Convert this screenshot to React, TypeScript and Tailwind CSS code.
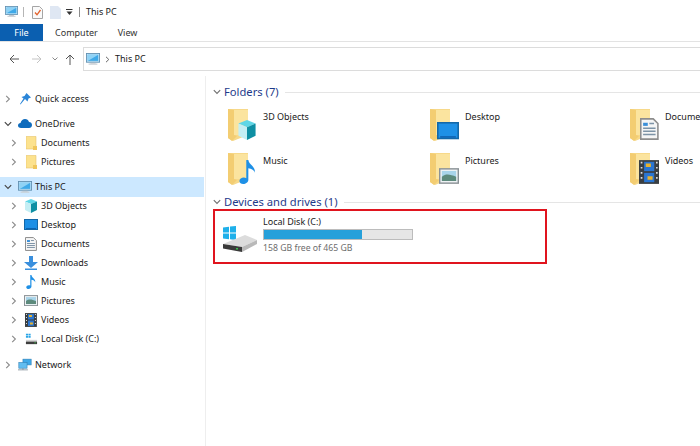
import React from 'react';

const font = { fontFamily: '"Noto Sans", "Open Sans", sans-serif' };

function Chevron({ open, color = '#7a7a7a' }: { open?: boolean; color?: string }) {
  return (
    <svg width="8" height="8" viewBox="0 0 8 8" fill="none" stroke={color} strokeWidth="1.1">
      {open ? <path d="M.8 2.2 4 5.4l3.2-3.2" /> : <path d="M2.2.8 5.4 4 2.2 7.2" />}
    </svg>
  );
}

function Monitor({ w = 16 }: { w?: number }) {
  return (
    <svg width={w} height={w * 0.875} viewBox="0 0 16 14">
      <rect x=".5" y=".5" width="15" height="10" fill="#bfe3f7" stroke="#5f8fb0" />
      <rect x="2" y="2" width="12" height="7" fill="#3fa9e8" />
      <path d="M2 2h12L2 9z" fill="#8fd2f5" />
      <rect x="5" y="11" width="6" height="1" fill="#a9b4bc" />
      <rect x="3" y="12" width="10" height="1.4" fill="#c9d0d5" />
    </svg>
  );
}

function SmallFolder() {
  return (
    <svg width="11" height="14" viewBox="0 0 11 14">
      <path d="M0 .5h10v12.5H0z" fill="#fce28e" stroke="#e6c56c" strokeWidth=".6" />
      <path d="M7 10h4v4H7z" fill="#f0c65c" />
    </svg>
  );
}

function Cube({ s = 14 }: { s?: number }) {
  return (
    <svg width={s} height={s} viewBox="0 0 14 14">
      <path d="M7 0 13 2.5 7 5 1 2.5z" fill="#5fd6e6" />
      <path d="M1 2.500 7 5v9L1 11z" fill="#c4eef4" />
      <path d="M13 2.500 7 5v9l6-3z" fill="#0f8fa3" />
    </svg>
  );
}

function DesktopGlyph({ s = 14 }: { s?: number }) {
  return (
    <svg width={s} height={s * 0.8} viewBox="0 0 14 11.200">
      <rect x=".5" y=".5" width="13" height="10" fill="#1e90e6" stroke="#1468a8" />
      <rect x="2" y="9" width="10" height="1" fill="#0f63b0" />
    </svg>
  );
}

function DocGlyph({ s = 14 }: { s?: number }) {
  return (
    <svg width={s * 0.85} height={s} viewBox="0 0 12 14">
      <path d="M.5.5h8l3 3v10H.5z" fill="#f5f5f5" stroke="#8d8d8d" />
      <path d="M2 3h3v2H2z" fill="#3b8fd8" />
      <path d="M6 3.500h3M2 6.500h8M2 8.500h8M2 10.500h8" stroke="#7d93a6" />
    </svg>
  );
}

function DownloadGlyph() {
  return (
    <svg width="14" height="14" viewBox="0 0 14 14">
      <path d="M5 0h4v6h5l-7 6-7-6h5z" fill="#3a8fdd" />
      <rect x="1" y="12.500" width="12" height="1.500" fill="#3a8fdd" />
    </svg>
  );
}

function NoteGlyph({ s = 14 }: { s?: number }) {
  return (
    <svg width={s * 0.75} height={s} viewBox="0 0 10 14">
      <path d="M4 0h1.200c.4 3 4.300 3.500 3.800 7.500C8.800 6 7 5 5.200 4.800V11.500C5.200 13 3.700 14 2.200 14 1 14 0 13.300 0 12.200 0 11 1.300 10.200 2.500 10.200c.6 0 1.100.1 1.500.4z" fill="#1e90e6" />
    </svg>
  );
}

function PictureGlyph({ s = 14 }: { s?: number }) {
  return (
    <svg width={s} height={s * 0.8} viewBox="0 0 14 11">
      <rect x=".5" y=".5" width="13" height="10" fill="#eef2f4" stroke="#8b9296" />
      <rect x="2" y="2" width="10" height="7" fill="#a8d4ea" />
      <path d="M2 6c3-2.500 6-1.500 10 0v3H2z" fill="#5d8a7c" />
    </svg>
  );
}

function FilmGlyph({ s = 14 }: { s?: number }) {
  return (
    <svg width={s * 0.85} height={s} viewBox="0 0 12 14">
      <rect width="12" height="14" fill="#3a3f42" />
      <rect x="3" y="1" width="6" height="5.500" fill="#2a76d2" />
      <rect x="3" y="7.500" width="6" height="5.500" fill="#2a76d2" />
      <path d="M4 2h3v2H4zM5 9.500h3v2H5z" fill="#e8b32e" />
      <path d="M1 1h1v1H1zM1 4h1v1H1zM1 7h1v1H1zM1 10h1v1H1zM10 1h1v1h-1zM10 4h1v1h-1zM10 7h1v1h-1zM10 10h1v1h-1z" fill="#dcdcdc" />
    </svg>
  );
}

function DriveGlyph() {
  return (
    <svg width="13" height="12" viewBox="0 0 15 14">
      <path d="M1 1h2.500v2H1zM4 1h2.500v2H4zM1 3.500h2.500v2H1zM4 3.500h2.500v2H4z" fill="#2aa5e6" />
      <path d="M1 8h13v2H1z" fill="#d4d4d4" />
      <path d="M1 10h13v3H1z" fill="#3e3e3e" />
      <rect x="11" y="11" width="1.500" height="1" fill="#3fd04f" />
    </svg>
  );
}

function NetworkGlyph() {
  return (
    <svg width="14" height="13" viewBox="0 0 17 15">
      <rect x="6" y="1" width="10" height="7" fill="#3fa9e8" stroke="#2f7fb5" strokeWidth=".7" />
      <rect x="1" y="5" width="10" height="7" fill="#62bdf0" stroke="#2f7fb5" strokeWidth=".7" />
      <path d="M0 14h12M6 12v2" stroke="#7d8a94" />
    </svg>
  );
}

function OneDriveGlyph() {
  return (
    <svg width="14" height="9" viewBox="0 0 14 9">
      <path d="M3 9C1 9 0 7.800 0 6.500 0 5 1.200 4 2.500 4 3.200 1.500 5 0 7 0c2 0 3.500 1.200 4 3 1.700 0 3 1.300 3 3 0 1.700-1.300 3-3 3z" fill="#0f6cbd" />
    </svg>
  );
}

function QuickStar() {
  return (
    <svg width="12" height="12" viewBox="0 0 12 12">
      <path d="M7.500 0 12 4.500 9.500 5.500 8.500 8.500 6 6 1.500 11.500 1 11 4.500 5.500 2.500 4 5.500 3z" fill="#2c86d8" />
    </svg>
  );
}

function TreeRow({ label, icon, level = 1, open, selected, className = '' }: {
  label: string;
  icon: React.ReactNode;
  level?: number;
  open?: boolean;
  selected?: boolean;
  className?: string;
}) {
  return (
    <div className={`flex h-[19px] items-center text-[9px] text-[#1a1a1a] ${selected ? 'bg-[#cce8ff]' : ''} ${className}`}>
      <span className={`flex justify-center ${level === 0 ? 'w-[16px]' : 'w-[28px]'}`}>
        <Chevron open={open} color={open ? '#444444' : '#8a8a8a'} />
      </span>
      {level === 0 ? (
        <span className="flex w-[17px] shrink-0 items-center justify-center">{icon}</span>
      ) : (
        <span className="ml-[-5px] flex w-[16px] shrink-0 items-center justify-center">{icon}</span>
      )}
      <span className="ml-[2px]">{label}</span>
    </div>
  );
}

function BigFolder({ overlay }: { overlay: React.ReactNode }) {
  return (
    <div className="relative h-[33px] w-[35px] shrink-0">
      <svg width="20" height="33" viewBox="0 0 20 33" className="block">
        <path d="M0 0h20v26L5 32 0 29z" fill="#f7d98a" />
        <path d="M6 1h14v25H6z" fill="#fbe49f" />
        <path d="M0 0 6 1v25l3 1-5 5-4-3z" fill="#f3cd72" />
      </svg>
      <div className="absolute bottom-[2px] right-[6px]">{overlay}</div>
    </div>
  );
}

function FolderCell({ label, overlay }: { label: string; overlay: React.ReactNode }) {
  return (
    <div className="flex h-[44px] items-start">
      <BigFolder overlay={overlay} />
      <span className="whitespace-nowrap pt-[1px] text-[9px] text-[#1a1a1a]">{label}</span>
    </div>
  );
}

function SectionHeader({ label }: { label: string }) {
  return (
    <div className="flex h-[16px] items-center">
      <span className="ml-[7px] mr-[3px] flex w-[8px]"><Chevron open color="#6f6f6f" /></span>
      <span className="whitespace-nowrap text-[11.200px] text-[#1e3a8a]">{label}</span>
      <div className="ml-[6px] h-[1px] flex-1 bg-[#e5e5e5]" />
    </div>
  );
}

export default function App() {
  return (
    <div className="flex h-[446px] w-[700px] flex-col overflow-hidden bg-white" style={font}>
      {/* title bar */}
      <div className="flex h-[24px] items-center pl-[5px] text-[9px] text-[#1a1a1a]">
        <Monitor w={13} />
        <div className="ml-[5px] h-[10px] w-[1px] bg-[#b5b5b5]" />
        <svg width="11" height="13" viewBox="0 0 11 13" className="ml-[8px]">
          <path d="M.5.500h7l3 3v9H.5z" fill="#fafafa" stroke="#a5a5a5" />
          <path d="M3 6.500 5 8.800 8.500 4" fill="none" stroke="#e2622c" strokeWidth="1.300" />
        </svg>
        <svg width="11" height="13" viewBox="0 0 11 13" className="ml-[7px]">
          <path d="M0 0h8l3 3v10H0z" fill="#dfe7f3" />
        </svg>
        <svg width="7" height="7" viewBox="0 0 7 7" className="ml-[5px]">
          <path d="M0 .5h6.500" stroke="#333333" />
          <path d="M.5 2.500h6L3.500 6z" fill="#333333" />
        </svg>
        <div className="ml-[6px] h-[10px] w-[1px] bg-[#8d8d8d]" />
        <span className="ml-[6px]">This PC</span>
      </div>

      {/* ribbon tabs */}
      <div className="flex h-[18px] items-stretch border-b border-[#e3e3e3] pt-[1px] text-[9px] text-[#333333]">
        <div className="mt-[-1px] flex w-[43px] items-center justify-center bg-[#0b5fb0] text-white">File</div>
        <span className="ml-[12px] self-center">Computer</span>
        <span className="ml-[20px] self-center">View</span>
      </div>

      {/* navigation bar */}
      <div className="flex h-[29px] items-end">
        <div className="flex h-[24px] w-[83px] items-center pl-[9px]">
          <svg width="11" height="10" viewBox="0 0 11 10" fill="none" stroke="#555555" strokeWidth="1"><path d="M10 5H1M5 1 1 5l4 4" /></svg>
          <svg width="11" height="10" viewBox="0 0 11 10" fill="none" stroke="#c4c4c4" strokeWidth="1" className="ml-[11px]"><path d="M1 5h9M6 1l4 4-4 4" /></svg>
          <svg width="6" height="4" viewBox="0 0 6 4" fill="none" stroke="#8a8a8a" strokeWidth="1" className="ml-[10px]"><path d="M.5.500 3 3 5.500.500" /></svg>
          <svg width="10" height="11" viewBox="0 0 10 11" fill="none" stroke="#555555" strokeWidth="1" className="ml-[7px]"><path d="M5 11V1M1 5l4-4 4 4" /></svg>
        </div>
        <div className="flex h-[24px] flex-1 items-center border border-r-0 border-[#dcdcdc] pl-[2px] text-[9px] text-[#1a1a1a]">
          <Monitor w={14} />
          <span className="ml-[5px]"><svg width="5" height="7" viewBox="0 0 5 7" fill="none" stroke="#666666"><path d="M1 .8 3.800 3.500 1 6.200" /></svg></span>
          <span className="ml-[5px]">This PC</span>
        </div>
      </div>

      <div className="flex flex-1 pt-[5px]">
        {/* navigation pane */}
        <aside className="w-[206px] shrink-0 border-r border-[#eeeeee] pr-[1px] pt-[13px]">
          <TreeRow level={0} label="Quick access" icon={<QuickStar />} />
          <TreeRow level={0} label="OneDrive" open icon={<OneDriveGlyph />} className="mt-[6px]" />
          <TreeRow label="Documents" icon={<SmallFolder />} />
          <TreeRow label="Pictures" icon={<SmallFolder />} />
          <TreeRow level={0} label="This PC" open selected icon={<Monitor w={14} />} className="mt-[6px] !h-[20px]" />
          <TreeRow label="3D Objects" icon={<Cube />} className="mt-[-1px]" />
          <TreeRow label="Desktop" icon={<DesktopGlyph />} />
          <TreeRow label="Documents" icon={<DocGlyph />} />
          <TreeRow label="Downloads" icon={<DownloadGlyph />} />
          <TreeRow label="Music" icon={<NoteGlyph />} />
          <TreeRow label="Pictures" icon={<PictureGlyph />} />
          <TreeRow label="Videos" icon={<FilmGlyph />} />
          <TreeRow label="Local Disk (C:)" icon={<DriveGlyph />} />
          <TreeRow level={0} label="Network" icon={<NetworkGlyph />} className="mt-[7px]" />
        </aside>

        {/* content */}
        <main className="min-w-0 flex-1 pt-[8px]">
          <SectionHeader label="Folders (7)" />
          <div className="mt-[9px] grid grid-cols-[202px_200px_100px] pl-[22px]">
            <FolderCell label="3D Objects" overlay={<Cube s={20} />} />
            <FolderCell label="Desktop" overlay={<DesktopGlyph s={22} />} />
            <FolderCell label="Documents" overlay={<DocGlyph s={22} />} />
            <FolderCell label="Music" overlay={<NoteGlyph s={24} />} />
            <FolderCell label="Pictures" overlay={<PictureGlyph s={20} />} />
            <FolderCell label="Videos" overlay={<FilmGlyph s={24} />} />
          </div>
          <div className="mt-[-3px]"><SectionHeader label="Devices and drives (1)" /></div>
          <div className="ml-[7px] mt-[-1px] flex h-[55px] w-[334px] border-2 border-[#e0141e] pl-[8px] pt-[4px]">
            <svg width="34" height="26" viewBox="0 0 34 26" className="mt-[11px] shrink-0">
              <path d="M0 1.500 6 .8v5.700H0zM7 .6 13 0v6.500H7zM0 7.500h6v5.700L0 12.500zM7 7.500h6V14l-6-.8z" fill="#1fb0ea" />
              <path d="M0 18 22 9 34 14 19 21z" fill="#dcdcdc" />
              <path d="M0 18 19 21V26L0 22.500z" fill="#3a3a3a" />
              <path d="M19 21 34 14V18L19 26z" fill="#b9b9b9" />
              <rect x="13" y="22" width="2" height="1.500" fill="#36c24a" />
            </svg>
            <div className="ml-[6px] w-[150px]">
              <div className="text-[9px] leading-[13px] text-[#1a1a1a]">Local Disk (C:)</div>
              <div className="mt-[1px] h-[11px] w-[150px] border border-[#bcbcbc] bg-[#e6e6e6]">
                <div className="h-full bg-[#26a0da]" style={{ width: '66%' }} />
              </div>
              <div className="mt-[1px] whitespace-nowrap text-[8.700px] leading-[14px] text-[#6d6d6d]">158 GB free of 465 GB</div>
            </div>
          </div>
        </main>
      </div>
    </div>
  );
}
